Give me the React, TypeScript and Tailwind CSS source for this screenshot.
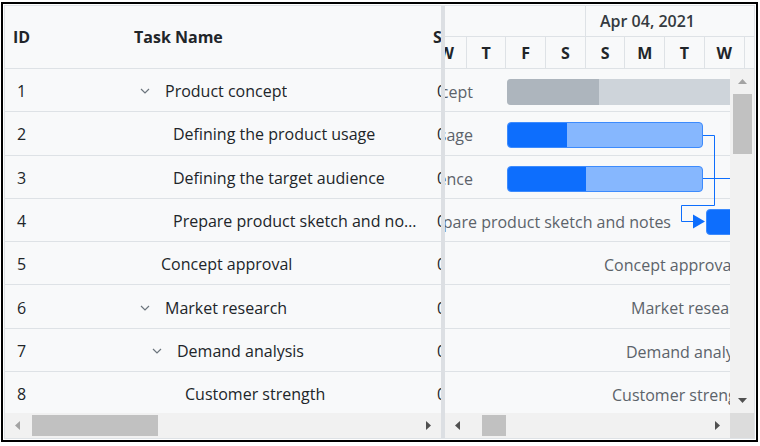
import React from 'react';

type Row = {
  id: number;
  name: string;
  parent?: boolean;
  chevron?: string;
  pad: string;
};

const rows: Row[] = [
  { id: 1, name: 'Product concept', parent: true, chevron: 'pl-[14px]', pad: 'pl-[15px]' },
  { id: 2, name: 'Defining the product usage', pad: 'pl-[47px]' },
  { id: 3, name: 'Defining the target audience', pad: 'pl-[47px]' },
  { id: 4, name: 'Prepare product sketch and notes', pad: 'pl-[47px]' },
  { id: 5, name: 'Concept approval', pad: 'pl-[35px]' },
  { id: 6, name: 'Market research', parent: true, chevron: 'pl-[14px]', pad: 'pl-[15px]' },
  { id: 7, name: 'Demand analysis', parent: true, chevron: 'pl-[26px]', pad: 'pl-[15px]' },
  { id: 8, name: 'Customer strength', pad: 'pl-[59px]' },
];

const days = ['W', 'T', 'F', 'S', 'S', 'M', 'T', 'W', 'T'];

const Chevron = () => (
  <svg width="10" height="6" viewBox="0 0 10 6" className="shrink-0">
    <path d="M1 1 L5 5 L9 1" fill="none" stroke="#6c757d" strokeWidth="1.2" />
  </svg>
);

const Arrow = ({ dir, dark }: { dir: 'up' | 'down' | 'left' | 'right'; dark?: boolean }) => {
  const fill = dark ? '#505050' : '#a3a3a3';
  const pts = {
    up: '0,5 4.5,0 9,5',
    down: '0,0 9,0 4.5,5',
    left: '5,0 5,9 0,4.5',
    right: '0,0 5,4.5 0,9',
  }[dir];
  const vertical = dir === 'up' || dir === 'down';
  return (
    <svg width={vertical ? 9 : 5} height={vertical ? 5 : 9}>
      <polygon points={pts} fill={fill} />
    </svg>
  );
};

const HScroll = ({ thumb, leftDark }: { thumb: string; leftDark?: boolean }) => (
  <div className="h-[25px] flex items-center bg-[#f1f1f1] shrink-0">
    <div className="w-[25px] h-full flex items-center justify-center shrink-0">
      <Arrow dir="left" dark={leftDark} />
    </div>
    <div className={thumb} />
    <div className="flex-1" />
    <div className="w-[25px] h-full flex items-center justify-center shrink-0">
      <Arrow dir="right" dark />
    </div>
  </div>
);

export default function App() {
  return (
    <div className="pt-[2px] pl-[1px] font-['Open_Sans',sans-serif] text-[16px] text-[#212529]">
      <div className="w-[757px] h-[440px] border-2 border-black bg-white p-[1px]">
        <div className="h-full border border-[#dee2e6] bg-[#f8f9fa] flex overflow-hidden">
          {/* grid side */}
          <div className="w-[436px] shrink-0 flex flex-col overflow-hidden">
            <div className="h-[63px] shrink-0 flex items-center border-b border-[#dee2e6] font-bold whitespace-nowrap">
              <div className="w-[121px] shrink-0 pl-[8px]">ID</div>
              <div className="w-[299px] shrink-0 pl-[8px]">Task Name</div>
              <div className="pl-[8px]">Start Date</div>
            </div>
            <div className="flex-1 overflow-hidden">
              {rows.map((r) => (
                <div key={r.id} className="h-[43.3px] pt-[2px] flex items-center border-b border-[#dee2e6] whitespace-nowrap">
                  <div className="w-[121px] shrink-0 pl-[12px]">{r.id}</div>
                  <div className="w-[299px] shrink-0 flex items-center pr-[5px] overflow-hidden">
                    {r.parent && (
                      <div className={r.chevron}>
                        <Chevron />
                      </div>
                    )}
                    <span className={`${r.pad} truncate`}>{r.name}</span>
                  </div>
                  <div className="pl-[12px]">04/04/2021</div>
                </div>
              ))}
            </div>
            <HScroll thumb="ml-[2px] w-[126px] h-[21px] bg-[#c1c1c1]" />
          </div>

          {/* splitter */}
          <div className="w-[4px] shrink-0 bg-[#dcdfe3]" />

          {/* gantt side */}
          <div className="flex-1 flex flex-col overflow-hidden">
            <div className="h-[63px] shrink-0 border-b border-[#dee2e6] flex flex-col">
              <div className="h-[31px] shrink-0 flex border-b border-[#dee2e6]">
                <div className="w-[141px] shrink-0 border-r border-[#dee2e6]" />
                <div className="pl-[14px] flex items-center font-semibold text-[#343a40] whitespace-nowrap">
                  Apr 04, 2021
                </div>
              </div>
              <div className="flex-1 flex -ml-[18px]">
                {days.map((d, i) => (
                  <div
                    key={i}
                    className="w-[39.7px] shrink-0 border-r border-[#dee2e6] flex items-center justify-center font-bold"
                  >
                    {d}
                  </div>
                ))}
              </div>
            </div>

            <div className="flex-1 flex overflow-hidden">
              <div className="flex-1 relative overflow-hidden text-[#5c636a] whitespace-nowrap">
                {/* row 1 */}
                <div className="h-[43.3px] border-b border-[#dee2e6] relative">
                  <span className="absolute right-[257px] top-[12px] leading-[22px]">Product concept</span>
                  <div className="absolute left-[62px] top-[10px] h-[26px] w-[240px] rounded-[4px] bg-[#ced4da] overflow-hidden flex">
                    <div className="w-[92px] h-full bg-[#adb5bd]" />
                  </div>
                </div>
                {/* row 2 */}
                <div className="h-[43.3px] border-b border-[#dee2e6] relative">
                  <span className="absolute right-[257px] top-[12px] leading-[22px]">Defining the product usage</span>
                  <div className="absolute left-[62px] top-[10px] h-[26px] w-[196px] rounded-[4px] border border-[#3d8bfd] bg-[#86b7fe] overflow-hidden flex">
                    <div className="w-[59px] h-full bg-[#0d6efd]" />
                  </div>
                </div>
                {/* row 3 */}
                <div className="h-[43.3px] border-b border-[#dee2e6] relative">
                  <span className="absolute right-[257px] top-[12px] leading-[22px]">Defining the target audience</span>
                  <div className="absolute left-[62px] top-[10px] h-[26px] w-[196px] rounded-[4px] border border-[#3d8bfd] bg-[#86b7fe] overflow-hidden flex">
                    <div className="w-[78px] h-full bg-[#0d6efd]" />
                  </div>
                </div>
                {/* row 4 */}
                <div className="h-[43.3px] border-b border-[#dee2e6] relative">
                  <span className="absolute right-[59px] top-[12px] leading-[22px]">Prepare product sketch and notes</span>
                  <div className="absolute left-[261px] top-[10px] h-[26px] w-[60px] rounded-[4px] border border-[#3d8bfd] bg-[#0d6efd]" />
                </div>
                {/* rows 5-8 */}
                <div className="h-[43.3px] border-b border-[#dee2e6] relative">
                  <span className="absolute left-[159px] top-[12px] leading-[22px]">Concept approval</span>
                </div>
                <div className="h-[43.3px] border-b border-[#dee2e6] relative">
                  <span className="absolute left-[186px] top-[12px] leading-[22px]">Market research</span>
                </div>
                <div className="h-[43.3px] border-b border-[#dee2e6] relative">
                  <span className="absolute left-[181px] top-[12px] leading-[22px]">Demand analysis</span>
                </div>
                <div className="h-[43.3px] border-b border-[#dee2e6] relative">
                  <span className="absolute left-[167px] top-[12px] leading-[22px]">Customer strength</span>
                </div>

                {/* connectors */}
                <svg className="absolute left-0 top-0" width="285" height="345">
                  <path
                    d="M258 66.5 H269.5 V136.5 H236.5 V152.5 H249"
                    fill="none"
                    stroke="#0d6efd"
                    strokeWidth="1"
                  />
                  <polygon points="248,145.5 260,152.5 248,159.5" fill="#0d6efd" />
                  <path d="M258 109.5 H290" fill="none" stroke="#0d6efd" strokeWidth="1" />
                </svg>
              </div>

              {/* vertical scrollbar */}
              <div className="w-[24px] shrink-0 bg-[#f1f1f1] flex flex-col">
                <div className="h-[25px] flex items-center justify-center">
                  <Arrow dir="up" />
                </div>
                <div className="h-[60px] ml-[3px] mr-[2px] bg-[#c1c1c1]" />
                <div className="flex-1" />
                <div className="h-[25px] flex items-center justify-center">
                  <Arrow dir="down" dark />
                </div>
              </div>
            </div>

            <div className="flex shrink-0">
              <div className="flex-1">
                <HScroll thumb="ml-[12px] w-[24px] h-[21px] bg-[#c1c1c1]" leftDark />
              </div>
              <div className="w-[24px] h-[25px] bg-[#dcdcdc]" />
            </div>
          </div>
        </div>
      </div>
    </div>
  );
}
